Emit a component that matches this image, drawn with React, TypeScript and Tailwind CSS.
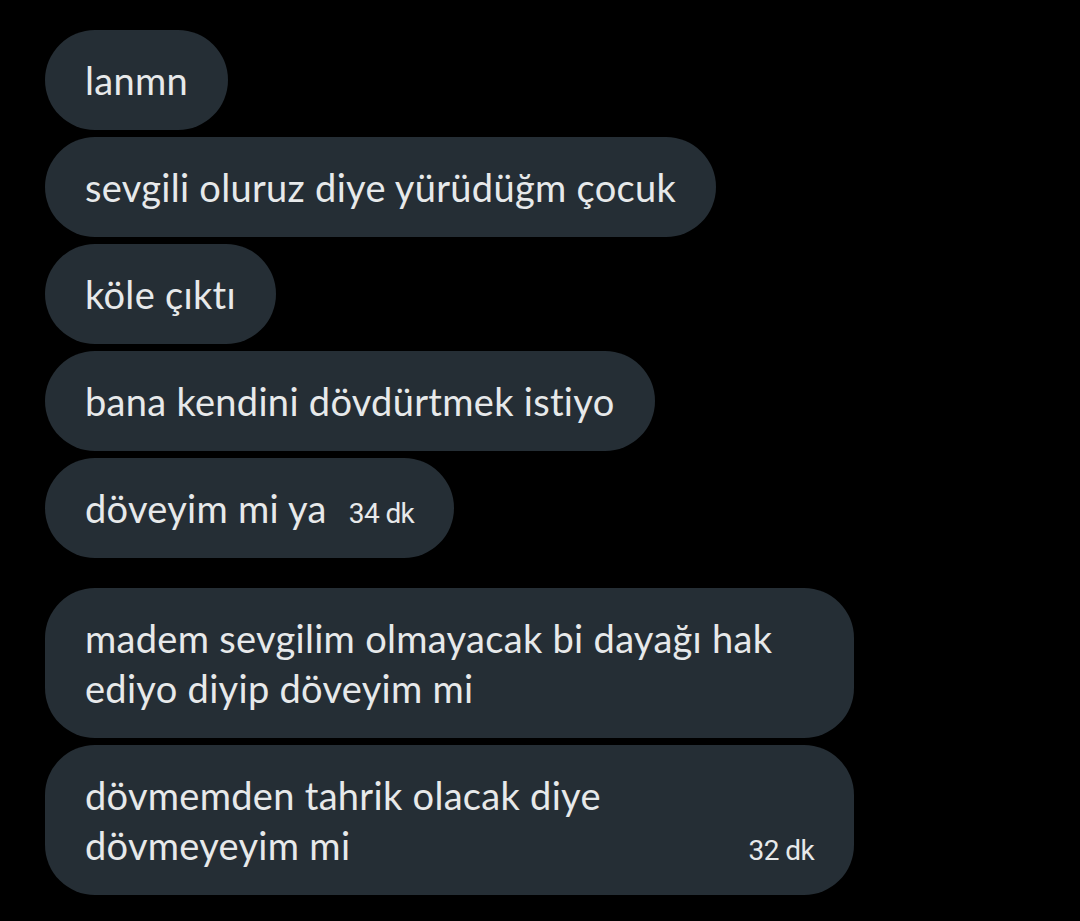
import React from 'react';

const Bubble: React.FC<{ children: React.ReactNode; wide?: boolean }> = ({ children, wide }) => (
  <div
    className={`bg-[#252e35] text-[#e7e9ea] rounded-[50px] px-10 py-[25px] text-[38px] leading-[50px] tracking-[0.3px] [font-variant-ligatures:none] ${
      wide ? 'w-[809px]' : 'w-fit'
    }`}
  >
    {children}
  </div>
);

const Time: React.FC<{ children: React.ReactNode }> = ({ children }) => (
  <span className="font-['Roboto',sans-serif] text-[28px] leading-none tracking-[-0.6px] text-[#e7e9ea]">
    {children}
  </span>
);

export default function App() {
  return (
    <div className="min-h-[921px] w-[1080px] bg-black pl-[45px] pt-[30px] font-['Lato',sans-serif]">
      <div className="flex flex-col gap-[7px]">
        <Bubble>lanmn</Bubble>
        <Bubble>sevgili oluruz diye yürüdüğm çocuk</Bubble>
        <Bubble>köle çıktı</Bubble>
        <Bubble>bana kendini dövdürtmek istiyo</Bubble>
        <Bubble>
          döveyim mi ya
          <span className="ml-[22px]">
            <Time>34 dk</Time>
          </span>
        </Bubble>
      </div>
      <div className="mt-[30px] flex flex-col gap-[7px]">
        <Bubble wide>
          madem sevgilim olmayacak bi dayağı hak
          <br />
          ediyo diyip döveyim mi
        </Bubble>
        <Bubble wide>
          <div>dövmemden tahrik olacak diye</div>
          <div className="flex items-baseline justify-between">
            <span>dövmeyeyim mi</span>
            <Time>32 dk</Time>
          </div>
        </Bubble>
      </div>
    </div>
  );
}
